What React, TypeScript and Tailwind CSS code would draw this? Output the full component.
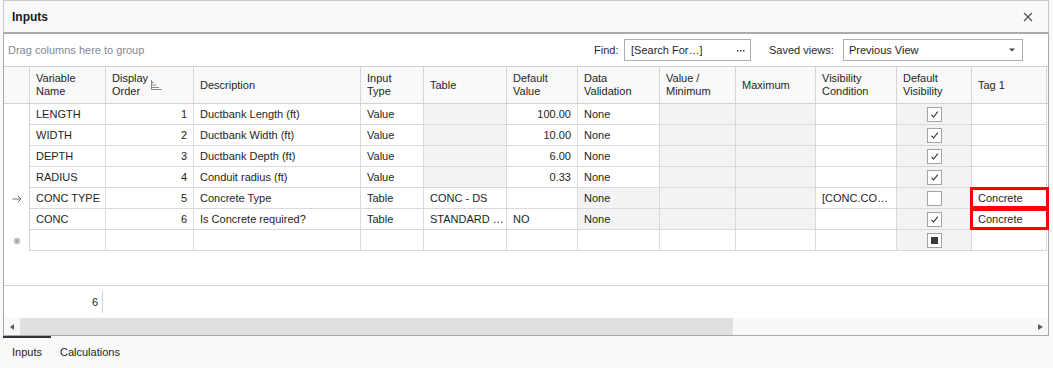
import React from "react";

type Cell = {
  t?: string;
  r?: boolean;
  g?: boolean;
  c?: "y" | "n" | "i";
  red?: boolean;
};

const rows: { ind?: "arrow" | "star"; cells: Cell[] }[] = [
  {
    cells: [
      { t: "LENGTH" }, { t: "1", r: true }, { t: "Ductbank Length (ft)" }, { t: "Value" }, { g: true },
      { t: "100.00", r: true }, { t: "None" }, { g: true }, { g: true }, {}, { g: true, c: "y" }, {},
    ],
  },
  {
    cells: [
      { t: "WIDTH" }, { t: "2", r: true }, { t: "Ductbank Width (ft)" }, { t: "Value" }, { g: true },
      { t: "10.00", r: true }, { t: "None" }, { g: true }, { g: true }, {}, { g: true, c: "y" }, {},
    ],
  },
  {
    cells: [
      { t: "DEPTH" }, { t: "3", r: true }, { t: "Ductbank Depth (ft)" }, { t: "Value" }, { g: true },
      { t: "6.00", r: true }, { t: "None" }, { g: true }, { g: true }, {}, { g: true, c: "y" }, {},
    ],
  },
  {
    cells: [
      { t: "RADIUS" }, { t: "4", r: true }, { t: "Conduit radius (ft)" }, { t: "Value" }, { g: true },
      { t: "0.33", r: true }, { t: "None" }, { g: true }, { g: true }, {}, { g: true, c: "y" }, {},
    ],
  },
  {
    ind: "arrow",
    cells: [
      { t: "CONC TYPE" }, { t: "5", r: true }, { t: "Concrete Type" }, { t: "Table" }, { t: "CONC - DS" },
      {}, { t: "None", g: true }, { g: true }, { g: true }, { t: "[CONC.CO…" }, { g: true, c: "n" },
      { t: "Concrete", red: true },
    ],
  },
  {
    cells: [
      { t: "CONC" }, { t: "6", r: true }, { t: "Is Concrete required?" }, { t: "Table" }, { t: "STANDARD …" },
      { t: "NO" }, { t: "None", g: true }, { g: true }, { g: true }, {}, { g: true, c: "y" },
      { t: "Concrete", red: true },
    ],
  },
  {
    ind: "star",
    cells: [{}, {}, {}, {}, {}, {}, {}, {}, {}, {}, { g: true, c: "i" }, {}],
  },
];

const headers: string[][] = [
  ["Variable", "Name"],
  ["Display", "Order"],
  ["Description"],
  ["Input", "Type"],
  ["Table"],
  ["Default", "Value"],
  ["Data", "Validation"],
  ["Value /", "Minimum"],
  ["Maximum"],
  ["Visibility", "Condition"],
  ["Default", "Visibility"],
  ["Tag 1"],
];

function Check({ kind }: { kind: "y" | "n" | "i" }) {
  return (
    <div className="w-[15px] h-[15px] border border-[#a4a4a4] bg-white flex items-center justify-center">
      {kind === "y" && (
        <svg width="13" height="13" viewBox="0 0 13 13">
          <path d="M3.5 6.8 L5.6 9 L9.8 3.6" fill="none" stroke="#2f2f2f" strokeWidth="1.1" />
        </svg>
      )}
      {kind === "i" && <div className="w-[7px] h-[7px] bg-[#3a3a3a]" />}
    </div>
  );
}

function Indicator({ kind }: { kind?: "arrow" | "star" }) {
  return (
    <div className="h-[21px] border-r border-[#d6d6d6] flex items-center justify-center">
      {kind === "arrow" && (
        <svg width="10" height="8" viewBox="0 0 10 8">
          <path d="M0.5 4 H9 M5.8 0.8 L9 4 L5.8 7.2" fill="none" stroke="#6a6a6a" strokeWidth="1" />
        </svg>
      )}
      {kind === "star" && (
        <svg width="8" height="8" viewBox="0 0 8 8">
          <path d="M4 0.5 V7.5 M0.5 4 H7.5 M1.5 1.5 L6.5 6.5 M6.5 1.5 L1.5 6.5" stroke="#a8a8a8" strokeWidth="1.1" />
        </svg>
      )}
    </div>
  );
}

export default function App() {
  return (
    <div className="w-[1053px] h-[368px] bg-[#f9f9f9] font-['Liberation_Sans',Arial,sans-serif] text-[11px] text-[#1e1e1e] overflow-hidden">
      <div className="ml-[3px] w-[1046px]">
        {/* Title bar */}
        <div className="h-[34px] border-t border-x border-[#c9c9c9] border-b-2 border-b-[#ababab] flex items-center pl-[8px] pr-[15px]">
          <span className="text-[12px] font-bold text-[#1a1a1a]">Inputs</span>
          <svg className="ml-auto" width="10" height="10" viewBox="0 0 10 10">
            <path d="M1 1 L9 9 M9 1 L1 9" stroke="#505050" strokeWidth="1.2" />
          </svg>
        </div>

        {/* Grid panel */}
        <div className="bg-white border-x border-b border-[#a9a9a9]">
          {/* group panel */}
          <div className="h-[33px] border-b border-[#d3d3d3] flex items-center pl-[4px] pr-[25px]">
            <span className="flex-1 text-[#7e8995]">Drag columns here to group</span>
            <span className="w-[30px] text-[#2a2a2a]">Find:</span>
            <div className="w-[127px] h-[22px] border border-[#adadad] bg-white flex items-center pl-[6px] pr-[5px]">
              <span className="text-[#1e1e1e]">[Search For…]</span>
              <svg className="ml-auto" width="8" height="3" viewBox="0 0 8 3">
                <rect x="0" y="1" width="1.5" height="1.5" fill="#444" />
                <rect x="3" y="1" width="1.5" height="1.5" fill="#444" />
                <rect x="6" y="1" width="1.5" height="1.5" fill="#444" />
              </svg>
            </div>
            <span className="w-[18px]" />
            <span className="w-[74px] text-[#2a2a2a]">Saved views:</span>
            <div className="w-[180px] h-[22px] border border-[#adadad] bg-white flex items-center pl-[5px] pr-[7px]">
              <span>Previous View</span>
              <svg className="ml-auto" width="6" height="4" viewBox="0 0 6 4">
                <path d="M0 0.5 H6 L3 3.5 Z" fill="#444" />
              </svg>
            </div>
          </div>

          {/* header */}
          <div className="grid grid-cols-[26px_76px_88px_167px_63px_83px_71px_82px_76px_80px_81px_75px_75px] bg-[#f9f9f9] border-b border-[#d3d3d3]">
            <div className="h-[36px] border-r border-[#d6d6d6]" />
            {headers.map((h, i) => (
              <div
                key={i}
                className="relative h-[36px] border-r border-[#d6d6d6] flex flex-col justify-center pl-[6px] leading-[13px] text-[#262626]"
              >
                {h.map((l, j) => (
                  <span key={j} className="whitespace-nowrap">
                    {l}
                  </span>
                ))}
                {i === 1 && (
                  <svg className="absolute left-[45px] top-[13px]" width="12" height="10" viewBox="0 0 12 10">
                    <path
                      d="M0.5 0 V10 M0.5 2.5 H3 M0.5 5 H5.5 M0.5 7.5 H8 M0.5 9.5 H11"
                      stroke="#8c8c8c"
                      strokeWidth="1"
                    />
                  </svg>
                )}
              </div>
            ))}
          </div>

          {/* rows */}
          {rows.map((row, ri) => (
            <div
              key={ri}
              className="grid grid-cols-[26px_76px_88px_167px_63px_83px_71px_82px_76px_80px_81px_75px_75px]"
            >
              <Indicator kind={row.ind} />
              {row.cells.map((c, ci) => (
                <div
                  key={ci}
                  className={`relative h-[21px] border-r border-b border-[#d9d9d9] flex items-center pl-[6px] pr-[6px] whitespace-nowrap overflow-visible ${
                    c.g ? "bg-[#f3f3f3]" : "bg-white"
                  } ${c.r ? "justify-end" : ""} ${c.c ? "justify-center pl-[0px] pr-[0px]" : ""}`}
                >
                  {c.c ? <Check kind={c.c} /> : c.t}
                  {c.red && (
                    <div className="absolute left-[-2px] right-[-3px] top-[-1px] bottom-[-1px] border-[3px] border-[#ff0000]" />
                  )}
                </div>
              ))}
            </div>
          ))}

          {/* empty area */}
          <div className="h-[34px]" />

          {/* footer */}
          <div className="h-[33px] border-t border-[#d3d3d3] flex items-center">
            <div className="w-[98px] text-right pr-[4px]">6</div>
            <div className="h-[22px] border-l border-[#d3d3d3]" />
          </div>

          {/* scrollbar */}
          <div className="h-[17px] flex bg-[#f8f8f8]">
            <div className="w-[16px] flex items-center justify-center">
              <svg width="4" height="6" viewBox="0 0 4 6">
                <path d="M4 0 V6 L0 3 Z" fill="#5a5a5a" />
              </svg>
            </div>
            <div className="w-[713px] bg-[#e0e0e0]" />
            <div className="flex-1" />
            <div className="w-[16px] flex items-center justify-center">
              <svg width="5" height="6" viewBox="0 0 5 6">
                <path d="M0 0 V6 L5 3 Z" fill="#5a5a5a" />
              </svg>
            </div>
          </div>
        </div>

        {/* tabs */}
        <div className="h-[32px] flex">
          <div className="w-[48px] border-t-2 border-[#333333] flex items-center pl-[9px] pb-[1px]">Inputs</div>
          <div className="flex items-center pl-[9px] pb-[1px] border-t-2 border-transparent">Calculations</div>
        </div>
      </div>
    </div>
  );
}
